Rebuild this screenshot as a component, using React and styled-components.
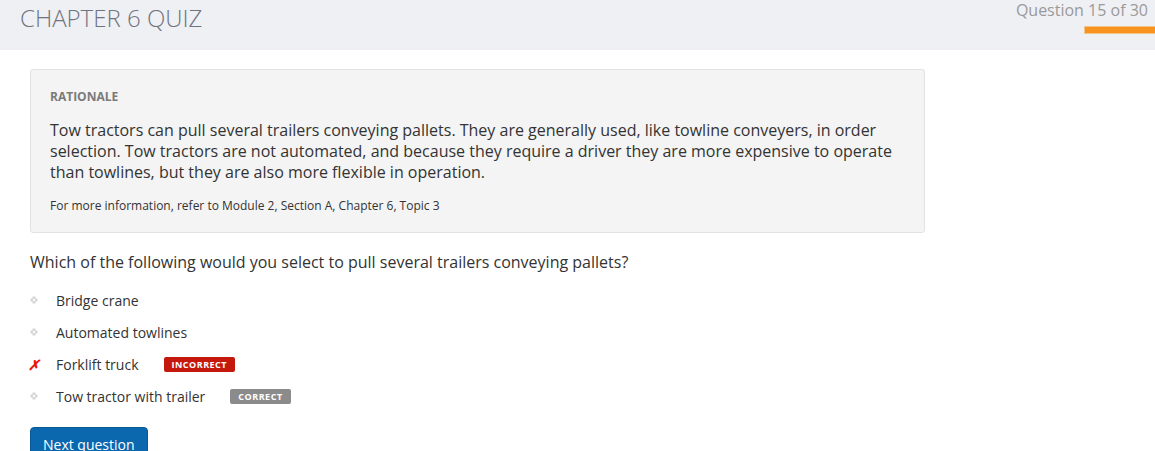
import React from 'react'
import styled, { createGlobalStyle } from 'styled-components'

const GlobalStyle = createGlobalStyle`
  body {
    margin: 0;
    font-family: "Open Sans", "Liberation Sans", sans-serif;
    background: #fff;
    color: #333;
  }
`;

const Header = styled.header`
  height: 50px;
  background: #eff0f4;
  display: flex;
  justify-content: space-between;
  align-items: flex-start;
  padding-left: 20px;
`;

const Title = styled.h1`
  margin: 0;
  margin-top: 1px;
  font-size: 24px;
  font-weight: 300;
  color: #6f7480;
`;

const Progress = styled.div`
  display: flex;
  flex-direction: column;
  align-items: flex-end;
`;

const Counter = styled.div`
  font-size: 16px;
  color: #9a9a9a;
  margin-top: -1px;
  padding-right: 7px;
`;

const Bar = styled.div`
  margin-top: 5px;
  width: 71px;
  height: 8px;
  background: #f7931e;
  border: 1px solid #f3c48a;
  border-right: none;
  box-sizing: border-box;
`;

const Main = styled.main`
  padding: 19px 30px 0;
`;

const Rationale = styled.section`
  width: 895px;
  box-sizing: border-box;
  background: #f4f4f4;
  border: 1px solid #e2e2e2;
  border-radius: 3px;
  padding: 18px 19px 18px;
`;

const Label = styled.div`
  font-size: 12px;
  font-weight: 700;
  color: #7a7a7a;
`;

const Body = styled.p`
  margin: 15px 0 0;
  font-size: 16px;
  line-height: 21px;
  color: #333;
`;

const More = styled.p`
  margin: 14px 0 0;
  font-size: 12px;
  color: #333;
`;

const Question = styled.p`
  margin: 18px 0 0;
  font-size: 16px;
  color: #333;
`;

const Options = styled.ul`
  list-style: none;
  padding: 0;
  margin: 11px 0 0;
`;

const Option = styled.li`
  display: flex;
  align-items: center;
  height: 32px;
  font-size: 14px;
  color: #333;
`;

const Marker = styled.span`
  width: 26px;
  display: flex;
  align-items: center;
`;

const Cross = styled.span`
  color: #e8160c;
  font-size: 14px;
  font-weight: 700;
  font-style: italic;
  margin-left: -2px;
`;

const Badge = styled.span`
  margin-left: 25px;
  height: 15px;
  padding: 0 8px;
  display: inline-flex;
  align-items: center;
  border-radius: 2px;
  background: ${p => (p.$correct ? '#8b8b8b' : '#c5180d')};
  color: #fff;
  font-size: 9px;
  font-weight: 700;
  letter-spacing: 0.5px;
`;

const NextButton = styled.button`
  margin-top: 15px;
  background: #0b67ae;
  color: #fff;
  border: 1px solid #0a5a98;
  border-radius: 4px;
  font-family: "Open Sans", "Liberation Sans", sans-serif;
  font-size: 14px;
  padding: 7px 12px 8px;
  cursor: pointer;
`;

const Dot = () => (
  <svg width="8" height="8" viewBox="0 0 8 8">
    <rect x="2.5" y="0.5" width="3" height="3" fill="#d5d5d5" />
    <rect x="0.5" y="2.5" width="3" height="3" fill="#d5d5d5" />
    <rect x="4.5" y="2.5" width="3" height="3" fill="#d5d5d5" />
    <rect x="2.5" y="4.5" width="3" height="3" fill="#d5d5d5" />
    <rect x="3" y="3" width="2" height="2" fill="#fff" />
  </svg>
);

const options = [
  { text: 'Bridge crane' },
  { text: 'Automated towlines' },
  { text: 'Forklift truck', wrong: true },
  { text: 'Tow tractor with trailer', correct: true },
];

export default function App() {
  return (
    <>
      <GlobalStyle />
      <Header>
        <Title>CHAPTER 6 QUIZ</Title>
        <Progress>
          <Counter>Question 15 of 30</Counter>
          <Bar />
        </Progress>
      </Header>
      <Main>
        <Rationale>
          <Label>RATIONALE</Label>
          <Body>
            Tow tractors can pull several trailers conveying pallets. They are generally used, like towline conveyers, in order
            selection. Tow tractors are not automated, and because they require a driver they are more expensive to operate
            than towlines, but they are also more flexible in operation.
          </Body>
          <More>For more information, refer to Module 2, Section A, Chapter 6, Topic 3</More>
        </Rationale>
        <Question>Which of the following would you select to pull several trailers conveying pallets?</Question>
        <Options>
          {options.map(o => (
            <Option key={o.text}>
              <Marker>{o.wrong ? <Cross>✗</Cross> : <Dot />}</Marker>
              {o.text}
              {o.wrong && <Badge>INCORRECT</Badge>}
              {o.correct && <Badge $correct>CORRECT</Badge>}
            </Option>
          ))}
        </Options>
        <NextButton>Next question</NextButton>
      </Main>
    </>
  )
}
